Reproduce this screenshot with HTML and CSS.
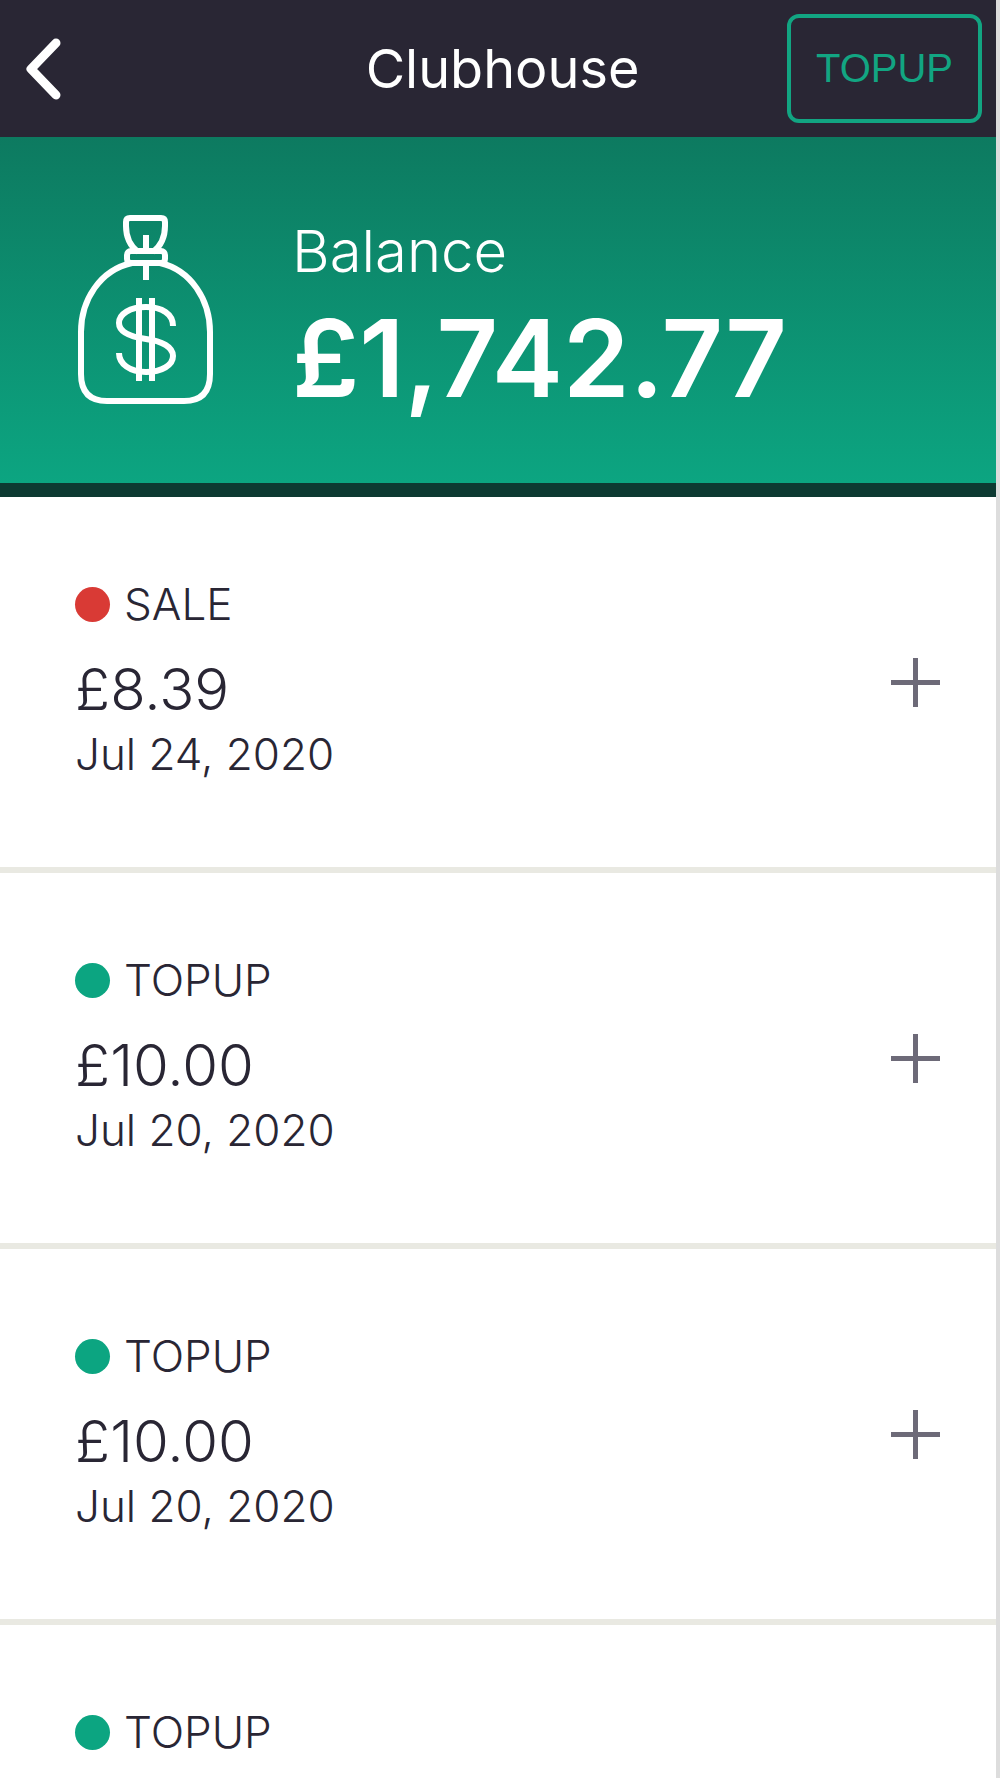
FILE: index.html
```
<!doctype html>
<html lang="en">
<head>
<title>Clubhouse</title>
<meta charset="utf-8">
<meta name="viewport" content="width=device-width, initial-scale=1">
<link rel="stylesheet" href="styles.css">
</head>
<body>
<div class="app">
	<header class="topbar">
		<button type="button" class="back" aria-label="Back">
			<svg width="40" height="64" viewBox="0 0 40 64">
				<path d="M33 6L8 32L33 58"/>
			</svg>
		</button>
		<h1>Clubhouse</h1>
		<button type="button" class="topup">TOPUP</button>
	</header>

	<section class="balance">
		<svg class="bag" width="140" height="192" viewBox="0 0 140 192" aria-hidden="true">
			<!-- neck -->
			<path d="M62 38C53 31 50 22 50 12V8Q50 4 54 4H85Q89 4 89 8V12C89 22 86 31 77 38"/>
			<rect x="51" y="37" width="38" height="12" rx="4"/>
			<path d="M70 21V37M70 49V66"/>
			<!-- sack -->
			<path d="M56 49C24 56 5 86 5 118V160Q5 187 31 187H108Q134 187 134 160V118C134 86 115 56 84 49"/>
			<!-- dollar -->
			<path d="M97 112C97 100 86 93 70 93C54 93 43 100 43 109C43 119 56 123 70 125C86 127 97 133 97 142C97 151 86 158 70 158C54 158 43 150 43 139"/>
			<path d="M63 84V167M76 84V167"/>
		</svg>
		<div>
			<p class="caption">Balance</p>
			<p class="total">£1,742.77</p>
		</div>
	</section>

	<ul class="list">
		<li>
			<div class="entry">
				<p class="type"><span class="dot sale"></span>SALE</p>
				<p class="amount">£8.39</p>
				<p class="date">Jul 24, 2020</p>
			</div>
			<button type="button" class="more" aria-label="Show details"></button>
		</li>
		<li>
			<div class="entry">
				<p class="type"><span class="dot"></span>TOPUP</p>
				<p class="amount">£10.00</p>
				<p class="date">Jul 20, 2020</p>
			</div>
			<button type="button" class="more" aria-label="Show details"></button>
		</li>
		<li>
			<div class="entry">
				<p class="type"><span class="dot"></span>TOPUP</p>
				<p class="amount">£10.00</p>
				<p class="date">Jul 20, 2020</p>
			</div>
			<button type="button" class="more" aria-label="Show details"></button>
		</li>
		<li>
			<div class="entry">
				<p class="type"><span class="dot"></span>TOPUP</p>
			</div>
		</li>
	</ul>
</div>
</body>
</html>
```
FILE: styles.css
```
* {
	box-sizing: border-box;
}

body, h1, p, ul {
	margin: 0;
	padding: 0;
}

body {
	background: #fff;
	color: #292634;
	font-family: Inter, "Liberation Sans", sans-serif;
	font-weight: 300;
}

button {
	background: none;
	border: none;
	padding: 0;
	cursor: pointer;
}

svg {
	display: block;
	fill: none;
	stroke: #fff;
	stroke-linecap: round;
	stroke-linejoin: round;
}

.app {
	height: 100vh;
	overflow: hidden;
	border-right: 4px solid #ddd;
}

.topbar {
	display: grid;
	grid-template-columns: 1fr auto 1fr;
	align-items: center;
	padding: 14px 14px 14px 23px;
	background: #292634;
}

.topbar h1 {
	color: #fff;
	font-size: 54px;
	font-weight: 400;
	line-height: 64px;
}

.back {
	justify-self: start;
}

.back svg {
	stroke-width: 9px;
}

.topup {
	justify-self: end;
	padding: 27px 25px;
	border: 4px solid #12a582;
	border-radius: 12px;
	color: #12a582;
	font-family: "Liberation Sans", Arial, sans-serif;
	font-size: 40px;
	line-height: 47px;
}

.balance {
	display: flex;
	align-items: center;
	gap: 76px;
	min-height: 360px;
	padding-left: 76px;
	background: #0ca581 linear-gradient(#0d7a60, #0ca581);
	border-bottom: 14px solid #0d3a32;
	color: #fff;
}

.bag {
	stroke-width: 6px;
}

.bag path {
	stroke-linecap: butt;
}

.caption {
	font-size: 58px;
	line-height: 72px;
}

.total {
	margin-top: 24px;
	font-size: 107px;
	font-weight: 600;
	line-height: 94px;
}

.list {
	list-style: none;
}

.list li {
	display: flex;
	align-items: center;
	justify-content: space-between;
	padding: 0 56px 0 75px;
	border-bottom: 6px solid #e9e9e2;
}

.entry {
	padding: 82px 0 88px;
}

.type {
	display: flex;
	align-items: center;
	gap: 14px;
	font-size: 44px;
	line-height: 50px;
}

.dot {
	width: 35px;
	height: 35px;
	border-radius: 50%;
	background: #0ca581;
}

.dot.sale {
	background: #d93a35;
}

.amount {
	margin: 30px 0 10px;
	font-size: 58px;
	line-height: 60px;
}

.date {
	font-size: 44px;
	line-height: 50px;
}

/* plus sign made of two bars */
.more {
	width: 49px;
	height: 49px;
	background:
		linear-gradient(#6d6a78, #6d6a78) center / 100% 5px no-repeat,
		linear-gradient(#6d6a78, #6d6a78) center / 5px 100% no-repeat;
}
```
